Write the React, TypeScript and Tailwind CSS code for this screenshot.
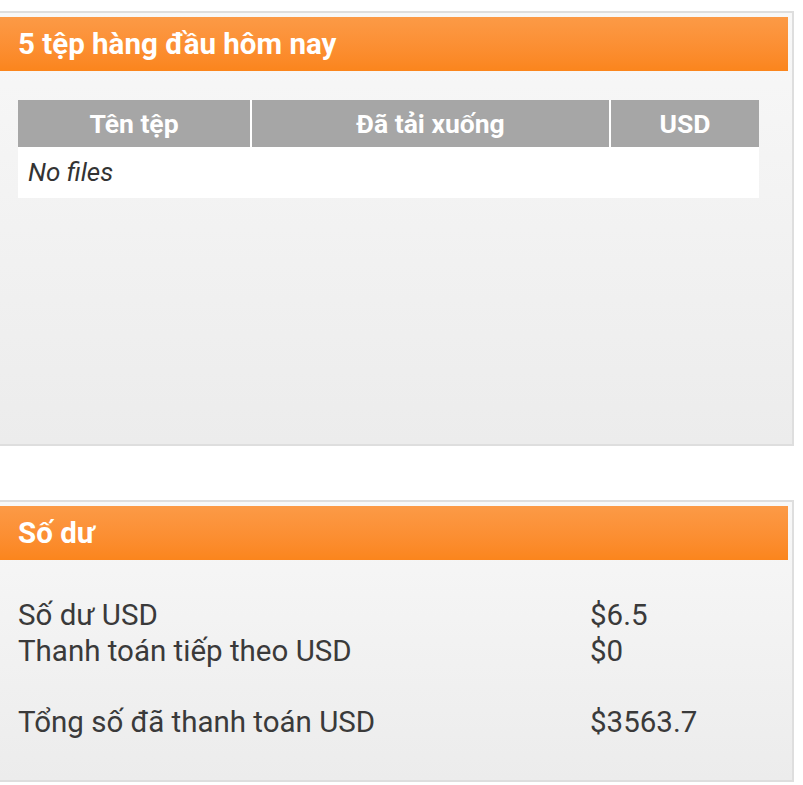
import React from 'react';

const font = { fontFamily: 'Roboto, "Noto Sans", Arial, sans-serif' };

const Panel: React.FC<{ title: string; children: React.ReactNode; className?: string }> = ({ title, children, className }) => (
  <div className={`-ml-[6px] w-[800px] border-2 border-[#dedede] bg-gradient-to-b from-[#f8f8f8] to-[#ececec] p-[4px] ${className ?? ''}`}>
    <div className="flex h-[54px] items-center bg-gradient-to-b from-[#fc9a46] to-[#fb851c] pl-[18px] text-[29.5px] font-bold text-white">
      {title}
    </div>
    {children}
  </div>
);

export default function App() {
  return (
    <div className="min-h-[785px] w-[803px] overflow-hidden bg-white pt-[11px] text-[#333]" style={font}>
      <Panel title="5 tệp hàng đầu hôm nay" className="h-[435px]">
        <div className="pl-[18px] pt-[29px]">
          <table className="w-[741px] border-collapse bg-white">
            <thead>
              <tr className="h-[47px] bg-[#a6a6a6] text-[26.5px] font-bold text-white">
                <th className="w-[233px] border-r-2 border-white font-bold">Tên tệp</th>
                <th className="w-[359px] border-r-2 border-white font-bold">Đã tải xuống</th>
                <th className="font-bold">USD</th>
              </tr>
            </thead>
            <tbody>
              <tr className="h-[51px]">
                <td colSpan={3} className="pl-[10px] text-[26px] italic text-[#333]">No files</td>
              </tr>
            </tbody>
          </table>
        </div>
      </Panel>
      <div className="h-[54px]" />
      <Panel title="Số dư" className="h-[282px]">
        <div className="pl-[18px] pt-[37px] text-[29.5px] leading-[36px] text-[#3a3a3a]">
          <div className="flex">
            <span className="w-[572px]">Số dư USD</span>
            <span>$6.5</span>
          </div>
          <div className="flex">
            <span className="w-[572px]">Thanh toán tiếp theo USD</span>
            <span>$0</span>
          </div>
          <div className="h-[35px]" />
          <div className="flex">
            <span className="w-[572px]">Tổng số đã thanh toán USD</span>
            <span>$3563.7</span>
          </div>
        </div>
      </Panel>
    </div>
  );
}
